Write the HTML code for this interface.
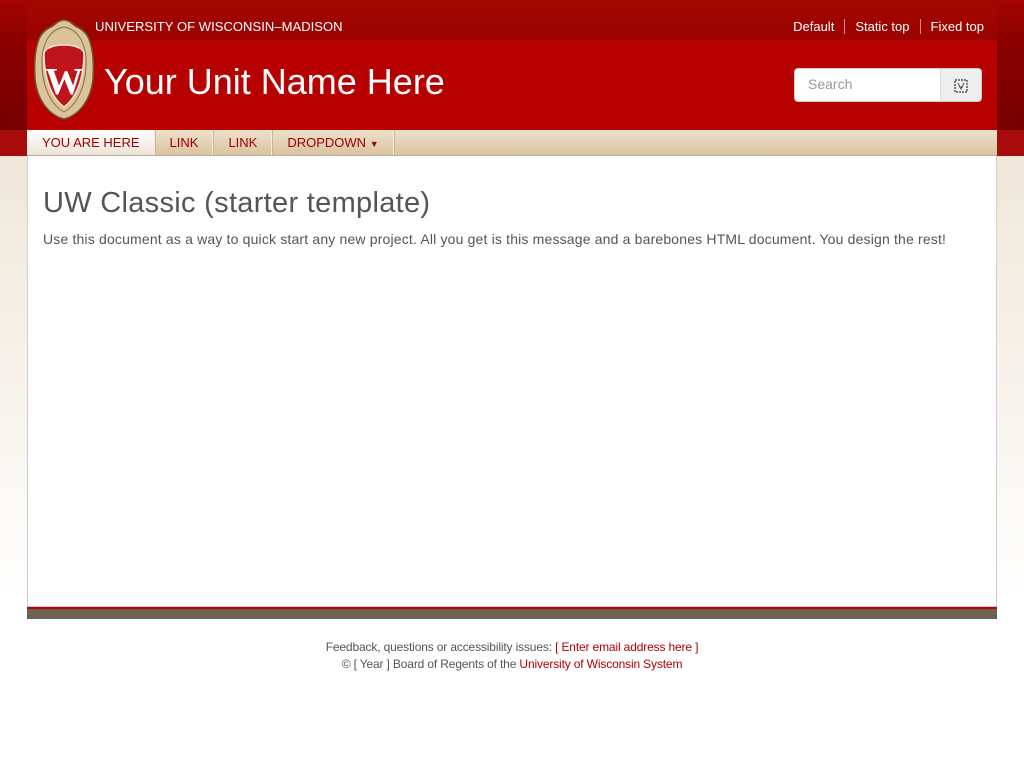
<!DOCTYPE html>
<html><head><style>
body{margin:0;width:1024px;height:768px;position:relative;font-family:"Liberation Sans",sans-serif;background:linear-gradient(#efe7d8 156px,#fff 600px);overflow:hidden}
.top{position:absolute;left:0;top:0;width:1024px;height:130px;background:linear-gradient(#a40600,#8a0000 40px,#760000 130px)}
.topc{position:absolute;left:27px;top:0;width:970px;height:40px;background:linear-gradient(#a40600,#9a0400)}
.hdr{position:absolute;left:27px;top:40px;width:970px;height:90px;background:#b70101}
.redband{position:absolute;left:0;top:130px;width:1024px;height:26px;background:#a80b0b}
.nav{position:absolute;left:27px;top:130px;width:970px;height:26px;background:linear-gradient(#ede1cc,#d9c3a1);border-bottom:1px solid #b9ad9a;box-sizing:border-box}
.nav a{float:left;height:25px;line-height:25px;font-size:13px;color:#a00000;padding:0 14px 0 15px;border-right:1px solid #f4ecdd;box-shadow:1px 0 0 #cbb491}
.nav a.on{background:linear-gradient(#fff,#ece4d6)}
.uw{position:absolute;left:95px;top:19px;color:#fff;font-size:13px;letter-spacing:0.05px}
.unit{position:absolute;left:104px;top:61px;color:#fff;font-size:36px}
.links{position:absolute;right:40px;top:19px;color:#fff;font-size:13px}
.links span{padding:0 10px;border-left:1px solid #d88}
.links span:first-child{border:0}
.search{position:absolute;left:794px;top:68px;width:188px;height:34px;background:#fff;border-radius:4px;box-sizing:border-box;border:1px solid #ccc}
.search div{position:absolute;left:13px;top:7px;color:#999;font-size:14px}
.search b{position:absolute;right:0;top:0;width:40px;height:32px;background:#efefef;border-left:1px solid #ddd;border-radius:0 4px 4px 0}
.main{position:absolute;left:27px;top:156px;width:970px;height:451px;background:#fff;border:1px solid #ccc;border-top:0;box-sizing:border-box}
h1{position:absolute;left:15px;top:31px;margin:0;font-weight:normal;font-size:29px;color:#555;letter-spacing:0.3px}
.main p{position:absolute;left:15px;top:75px;margin:0;font-size:14px;color:#555;letter-spacing:0.17px;white-space:nowrap}
.rl{position:absolute;left:27px;top:607px;width:970px;height:2px;background:#c00000}
.gl{position:absolute;left:27px;top:609px;width:970px;height:10px;background:#6b6352}
.foot{position:absolute;left:0;top:639px;width:1024px;text-align:center;font-size:12px;color:#555;line-height:17px;letter-spacing:-0.15px}
.foot a{color:#b00000}
</style></head><body>
<div class="top"></div><div class="topc"></div><div class="hdr"></div><div class="redband"></div>
<svg style="position:absolute;left:32px;top:19px" width="66" height="101" viewBox="0 0 66 101">
<path d="M32 1C26 1 23 6 19 8 14 10 10 13 7 20 3 30 2 45 3 60 5 80 16 96 32 100 48 96 59 80 61 60 62 45 61 30 57 20 54 13 50 10 45 8 41 6 38 1 32 1Z" fill="#d9c39b" stroke="#6b5030" stroke-width="1.5"/>
<path d="M32 8C20 10 12 20 10 38 9 62 16 84 32 93 48 84 55 62 54 38 52 20 44 10 32 8Z" fill="none" stroke="#8a6a40" stroke-width="1"/>
<path d="M32 26C22 26 13 29 12 34 12 62 21 80 32 88 43 80 52 62 52 34 51 29 42 26 32 26Z" fill="#c0141c" stroke="#f2e6d0" stroke-width="1.5"/>
<text x="32" y="75" text-anchor="middle" font-family="Liberation Serif" font-weight="bold" font-size="38" fill="#fff">W</text>
</svg>
<div class="uw">UNIVERSITY OF WISCONSIN–MADISON</div>
<div class="unit">Your Unit Name Here</div>
<div class="links"><span>Default</span><span>Static top</span><span style="padding-right:0">Fixed top</span></div>
<div class="search"><div>Search</div><b><svg style="position:absolute;left:13px;top:10px" width="14" height="14"><rect x="1" y="1" width="12" height="12" fill="none" stroke="#555" stroke-width="1.5" stroke-dasharray="2 1"/><path d="M4 4L7 10 10 4M5 8H9" stroke="#555" fill="none"/></svg></b></div>
<div class="nav"><a class="on">YOU ARE HERE</a><a>LINK</a><a>LINK</a><a>DROPDOWN <span style="font-size:9px">▼</span></a></div>
<div class="main"><h1>UW Classic (starter template)</h1><p>Use this document as a way to quick start any new project. All you get is this message and a barebones HTML document. You design the rest!</p></div>
<div class="rl"></div><div class="gl"></div>
<div class="foot">Feedback, questions or accessibility issues: <a>[ Enter email address here ]</a><br>© [ Year ] Board of Regents of the <a>University of Wisconsin System</a></div>
</body></html>
